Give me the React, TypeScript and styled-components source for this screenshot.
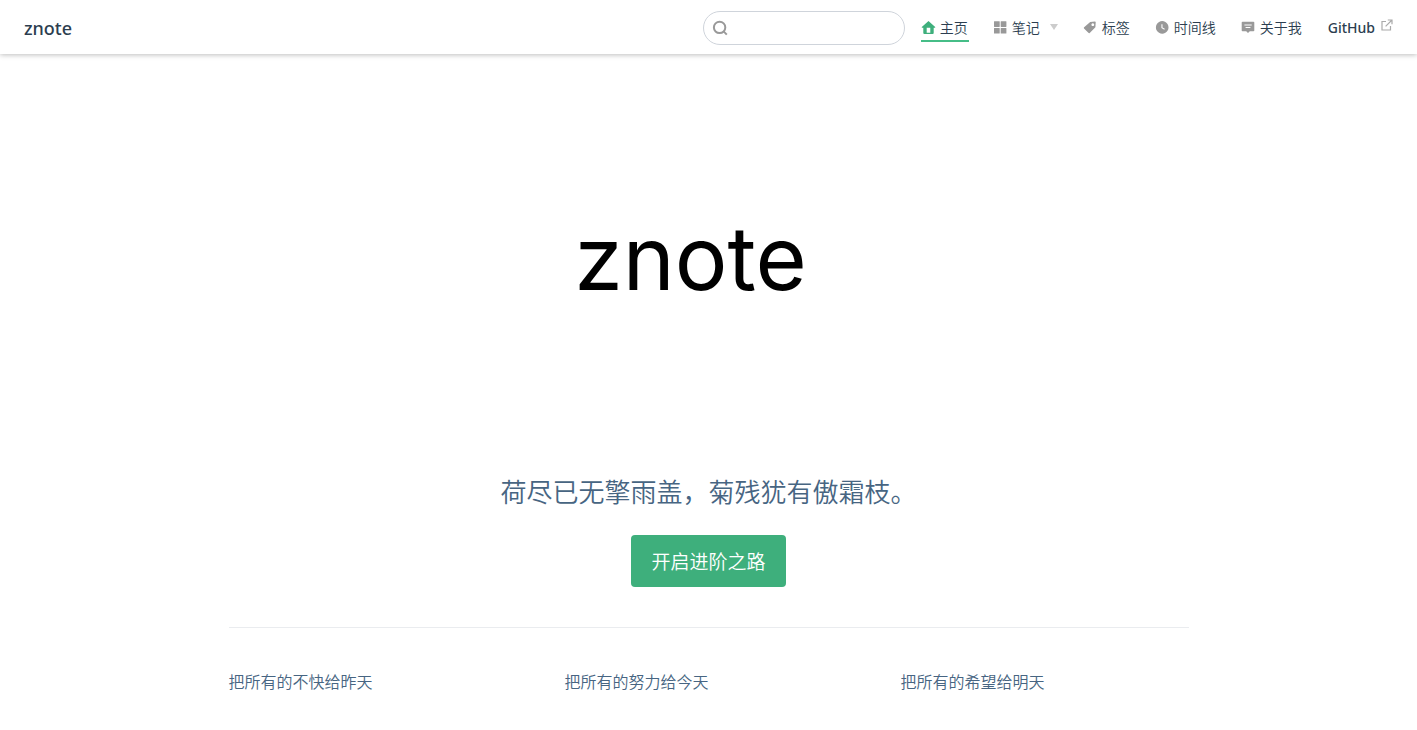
import React from "react";
import styled, { createGlobalStyle } from "styled-components";

const GlobalStyle = createGlobalStyle`
  *, *::before, *::after { box-sizing: border-box; }
  body {
    margin: 0;
    background: #fff;
    color: #2c3e50;
    font-family: "Noto Sans", "Noto Sans CJK SC", sans-serif;
    font-size: 16px;
  }
  a { color: inherit; text-decoration: none; }
`;

const Header = styled.header`
  display: flex;
  align-items: center;
  justify-content: space-between;
  height: 54px;
  padding: 2px 24px 0;
  background: #fff;
  box-shadow: 0 1px 5px rgba(0, 0, 0, 0.26);
`;

const Brand = styled.a`
  font-size: 18px;
  font-weight: 500;
  line-height: 26px;
`;

const Tools = styled.div`
  display: flex;
  align-items: center;
  gap: 16px;
`;

const SearchBox = styled.label`
  display: flex;
  align-items: center;
  gap: 8px;
  width: 202px;
  height: 34px;
  padding: 0 8px;
  border: 1px solid #cfd4db;
  border-radius: 17px;
  color: #999;
`;

const SearchInput = styled.input`
  flex: 1;
  min-width: 0;
  border: 0;
  outline: 0;
  background: transparent;
  color: #2c3e50;
  font: inherit;
  font-size: 14px;
`;

const Nav = styled.nav`
  display: flex;
  align-items: center;
  gap: 24px;
`;

const NavLink = styled.a<{ $active?: boolean }>`
  display: flex;
  align-items: center;
  gap: 4px;
  height: 28px;
  padding: 0 1px 0 0;
  border: 0 solid ${(p) => (p.$active ? "#46bd87" : "transparent")};
  border-bottom-width: 2px;
  background: none;
  color: inherit;
  font-family: "Noto Sans CJK SC", sans-serif;
  font-size: 14px;
  font-weight: 350;
  line-height: 26px;
  white-space: nowrap;

  svg { color: ${(p) => (p.$active ? "#3eaf7c" : "#999")}; }
`;

const Caret = styled.span`
  margin-left: 6px;
  border: 4px solid transparent;
  border-top: 6px solid #ccc;
  border-bottom: 0;
`;

const RepoLink = styled(NavLink)`
  gap: 6px;
  margin-left: 1px;
  padding-right: 0;
  border-bottom-width: 0;
  font-family: "Noto Sans", sans-serif;
  font-weight: 500;

  svg { align-self: flex-start; margin-top: 5px; color: #aaa; }
`;

const Main = styled.main`
  max-width: 960px;
  margin: 0 auto;
`;

const Hero = styled.section`
  display: flex;
  flex-direction: column;
  align-items: center;
  padding: 150px 0 40px;
  text-align: center;
`;

const Wordmark = styled.h1`
  margin: 0 36px 0 0;
  color: #000;
  font-family: Inter, sans-serif;
  font-size: 88px;
  font-weight: 400;
  line-height: 108px;
`;

const Poem = styled.p`
  margin: 161px 0 26px;
  color: #476582;
  font-family: "Noto Sans CJK SC", sans-serif;
  font-size: 26px;
  font-weight: 350;
  line-height: 36px;
`;

const Action = styled.a`
  padding: 11px 20px;
  border-radius: 4px;
  background: #3eaf7c;
  color: #fff;
  font-family: "Noto Sans CJK SC", sans-serif;
  font-size: 19px;
  font-weight: 350;
  line-height: 30px;
`;

const Features = styled.section`
  display: grid;
  grid-template-columns: repeat(3, 1fr);
  gap: 48px;
  padding: 40px 0 34px;
  border-top: 1px solid #eaecef;
`;

const Feature = styled.h2`
  margin: 0;
  color: #476582;
  font-family: "Noto Sans CJK SC", sans-serif;
  font-size: 16px;
  font-weight: 350;
  line-height: 26px;
`;

type IconProps = { children: React.ReactNode };
const Icon = ({ children }: IconProps) => (
  <svg width="15" height="15" viewBox="0 0 15 15" fill="currentColor" aria-hidden="true">
    {children}
  </svg>
);

const SearchIcon = () => (
  <svg width="16" height="16" viewBox="0 0 16 16" fill="none" stroke="currentColor" strokeWidth="2" aria-hidden="true">
    <circle cx="7.6" cy="7.4" r="5.7" />
    <path d="M11.6 11.4l3.2 3.2" />
  </svg>
);

export default function App() {
  return (
    <>
      <GlobalStyle />
      <Header>
        <Brand href="#">znote</Brand>
        <Tools>
          <SearchBox>
            <SearchIcon />
            <SearchInput type="text" aria-label="搜索" />
          </SearchBox>
          <Nav>
            <NavLink href="#" $active>
              <Icon>
                <path fillRule="evenodd" d="M7.5 1L14.2 7.1Q14.5 7.7 13.9 7.8H12.7V13Q12.7 14 11.7 14H3.3Q2.3 14 2.3 13V7.8H1.1Q.5 7.7.8 7.1ZM5.7 7.8V12.7H9.3V7.8Z" />
              </Icon>
              主页
            </NavLink>
            <NavLink as="button" type="button">
              <Icon>
                <rect x="1" y="1.2" width="5.7" height="5.7" rx=".4" />
                <rect x="7.7" y="1.2" width="5.7" height="5.7" rx=".4" />
                <rect x="1" y="7.9" width="5.7" height="5.7" rx=".4" />
                <rect x="7.7" y="7.9" width="5.7" height="5.7" rx=".4" />
              </Icon>
              笔记
              <Caret />
            </NavLink>
            <NavLink href="#tags">
              <Icon>
                <path fillRule="evenodd" d="M7.2 2L11.9 1.5Q12.8 1.5 12.7 2.3L12.4 7.2L6.7 12.9Q6 13.5 5.4 12.8L1 8.4Q.5 7.8 1.1 7.2ZM9.8 3.3a1.4 1.4 0 1 0 .01 0Z" />
              </Icon>
              标签
            </NavLink>
            <NavLink href="#timeline">
              <Icon>
                <path fillRule="evenodd" d="M7.2 1.1a6.3 6.3 0 1 0 .01 0ZM6.4 4.2H7.5V7.5L9.8 8.8L9.3 9.7L6.4 8.1Z" />
              </Icon>
              时间线
            </NavLink>
            <NavLink href="#about">
              <Icon>
                <path fillRule="evenodd" d="M1.5 1.7H12.5Q13.3 1.7 13.3 2.5V10.5Q13.3 11.3 12.5 11.3H8.8L7 13L5.2 11.3H1.5Q.7 11.3.7 10.5V2.5Q.7 1.7 1.5 1.7ZM3.4 4.4V5.4H10.7V4.4ZM4.6 7V8H9.4V7Z" />
              </Icon>
              关于我
            </NavLink>
            <RepoLink href="#github">
              GitHub
              <svg width="12" height="12" viewBox="0 0 12 12" fill="none" stroke="currentColor" strokeWidth="1.2" aria-hidden="true">
                <path d="M5 2.5H1V11H9.5V7M6.8 1H11V5.2M11 1L4.6 7.4" />
              </svg>
            </RepoLink>
          </Nav>
        </Tools>
      </Header>
      <Main>
        <Hero>
          <Wordmark>znote</Wordmark>
          <Poem>荷尽已无擎雨盖，菊残犹有傲霜枝。</Poem>
          <Action href="#notes">开启进阶之路</Action>
        </Hero>
        <Features>
          <Feature>把所有的不快给昨天</Feature>
          <Feature>把所有的努力给今天</Feature>
          <Feature>把所有的希望给明天</Feature>
        </Features>
      </Main>
    </>
  );
}
